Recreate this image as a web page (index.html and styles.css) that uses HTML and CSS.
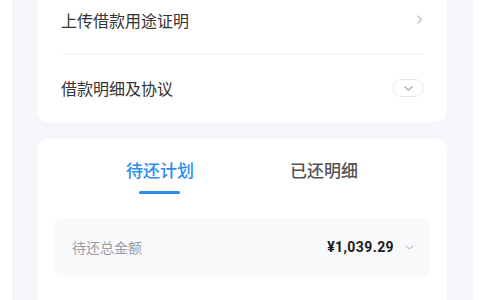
FILE: index.html
```html
<!DOCTYPE html>
<html lang="zh-CN">
<head>
  <meta charset="UTF-8">
  <meta name="viewport" content="width=device-width, initial-scale=1.0">
  <title>借款详情</title>

  <link rel="stylesheet" href="styles.css">
</head>
<body>
  <div class="page">
    <!-- 借款信息 -->
    <div class="card card-info">
      <div class="row row-first">
        <span class="row-title">上传借款用途证明</span>
        <svg class="arrow-right" width="6" height="9" viewBox="0 0 6 9">
          <path d="M1 1l3.5 3.5L1 8" fill="none" stroke="#b9bdc7" stroke-width="1.3" stroke-linecap="round" stroke-linejoin="round"/>
        </svg>
      </div>
      <div class="row row-last">
        <span class="row-title">借款明细及协议</span>
        <span class="toggle">
          <svg width="9" height="5" viewBox="0 0 9 5">
            <path d="M1 1l3.5 3L8 1" fill="none" stroke="#a6abb6" stroke-width="1.4" stroke-linecap="round" stroke-linejoin="round"/>
          </svg>
        </span>
      </div>
    </div>

    <!-- 还款计划 -->
    <div class="card card-plan">
      <div class="tabs">
        <div class="tab active">待还计划</div>
        <div class="tab">已还明细</div>
      </div>
      <div class="total">
        <span class="total-label">待还总金额</span>
        <span class="total-amount">¥1,039.29</span>
        <svg class="arrow-down" width="9" height="5" viewBox="0 0 9 5">
          <path d="M1 1l3.5 3L8 1" fill="none" stroke="#c5c9d2" stroke-width="1.2" stroke-linecap="round" stroke-linejoin="round"/>
        </svg>
      </div>
      <div class="plan-list"></div>
    </div>
  </div>
</body>
</html>
```

FILE: styles.css
```css
body {
  margin: 0;
  background-color: #fff;
  font-family: "Noto Sans CJK SC", "Noto Sans", sans-serif;
  color: #333;
}

.page {
  margin: 0 7px 0 12px;
  padding: 0 26px 0 25px;
  min-height: 300px;
  background-color: #f4f6fc;
  overflow: hidden;
}

.card {
  background-color: #fff;
  border-radius: 10px;
}

/* 借款信息 */
.card-info {
  margin-top: -14px;
  padding: 0 23px 0 24px;
}
.row {
  display: flex;
  align-items: center;
  justify-content: space-between;
}
.row-first {
  height: 67px;
  border-bottom: 1px solid #eef0f3;
}
.row-last {
  height: 68px;
}
.row-title {
  font-size: 16px;
  color: #333;
}
.arrow-right {
  margin-right: 1px;
}
.toggle {
  display: flex;
  align-items: center;
  justify-content: center;
  box-sizing: border-box;
  width: 31px;
  height: 18px;
  border: 1px solid #e6e8ed;
  border-radius: 9px;
}

/* 还款计划 */
.card-plan {
  margin-top: 17px;
  padding: 19px 17px 0;
  min-height: 200px;
}
.tabs {
  display: flex;
  justify-content: center;
}
.tab {
  width: 164px;
  text-align: center;
  font-size: 17px;
  font-weight: 500;
  line-height: 24px;
  color: #555;
  padding-bottom: 12px;
}
.tab.active {
  color: #2b8cee;
  position: relative;
}
.tab.active::after {
  content: '';
  position: absolute;
  left: 50%;
  bottom: 0;
  width: 41px;
  height: 3px;
  margin-left: -21px;
  border-radius: 2px;
  background-color: #2b8cee;
}

.total {
  display: flex;
  align-items: center;
  margin-top: 24px;
  height: 58px;
  padding: 0 16px 0 18px;
  border-radius: 8px;
  background-color: #f8f9fb;
}
.total-label {
  flex: 1;
  font-size: 14px;
  color: #9a9da4;
}
.total-amount {
  font-family: Roboto, "Noto Sans", sans-serif;
  font-weight: 700;
  font-size: 14px;
  letter-spacing: 0.4px;
  color: #1a1a1a;
}
.arrow-down {
  margin-left: 11px;
}
```
